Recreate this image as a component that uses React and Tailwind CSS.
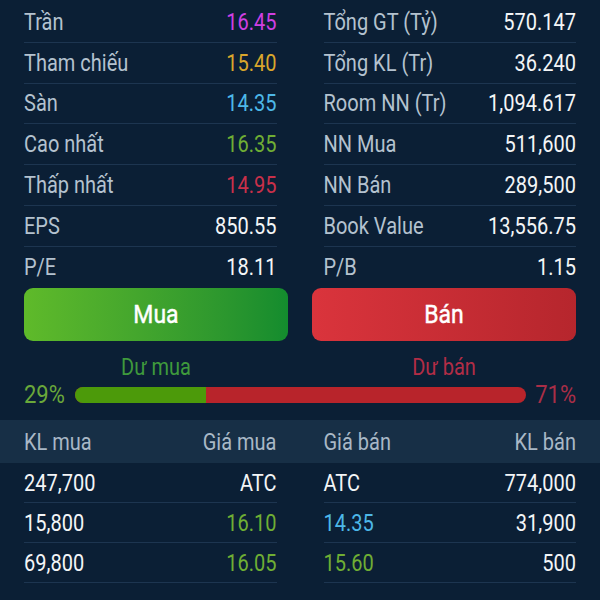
import React from "react";

const left = [
  ["Trần", "16.45", "text-[#cf3fe3]"],
  ["Tham chiếu", "15.40", "text-[#d9a62c]"],
  ["Sàn", "14.35", "text-[#4db8e8]"],
  ["Cao nhất", "16.35", "text-[#6fae34]"],
  ["Thấp nhất", "14.95", "text-[#c9304a]"],
  ["EPS", "850.55", "text-[#f3f5f7]"],
  ["P/E", "18.11", "text-[#f3f5f7]"],
];
const right = [
  ["Tổng GT (Tỷ)", "570.147"],
  ["Tổng KL (Tr)", "36.240"],
  ["Room NN (Tr)", "1,094.617"],
  ["NN Mua", "511,600"],
  ["NN Bán", "289,500"],
  ["Book Value", "13,556.75"],
  ["P/B", "1.15"],
];

function T({ className = "", children }) {
  return <span className={"inline-block scale-y-[1.16] " + className}>{children}</span>;
}

function Row({ label, value, color, last }) {
  return (
    <div
      className={
        "h-[40.75px] flex items-center justify-between " +
        (last ? "" : "border-b border-[#1d3550]")
      }
    >
      <T className="text-[#b4c2cf]">{label}</T>
      <T className={color}>{value}</T>
    </div>
  );
}

const book = [
  ["247,700", "ATC", "text-[#f3f5f7]", "ATC", "text-[#f3f5f7]", "774,000"],
  ["15,800", "16.10", "text-[#6fae34]", "14.35", "text-[#4db8e8]", "31,900"],
  ["69,800", "16.05", "text-[#6fae34]", "15.60", "text-[#6fae34]", "500"],
];

export default function App() {
  return (
    <div
      className="w-[600px] h-[600px] overflow-hidden bg-[#0b1f35] text-[20px] leading-[24px] text-[#f3f5f7]"
      style={{ fontFamily: "Roboto, 'Noto Sans', sans-serif" }}
    >
      <div className="grid grid-cols-2 gap-x-[47px] px-[24px] pt-[2px]">
        <div className="flex flex-col">
          {left.map((r, i) => (
            <Row key={i} label={r[0]} value={r[1]} color={r[2]} last={i === left.length - 1} />
          ))}
        </div>
        <div className="flex flex-col">
          {right.map((r, i) => (
            <Row key={i} label={r[0]} value={r[1]} color="text-[#f3f5f7]" last={i === right.length - 1} />
          ))}
        </div>
      </div>

      <div className="grid grid-cols-2 gap-x-[24px] px-[24px] mt-[1px]">
        <div className="h-[53px] rounded-[9px] bg-gradient-to-r from-[#5fba2a] to-[#138c2e] flex items-center justify-center text-[23px] text-white">
          <T className="[-webkit-text-stroke:0.4px_white]">Mua</T>
        </div>
        <div className="h-[53px] rounded-[9px] bg-gradient-to-r from-[#da343c] to-[#b6262d] flex items-center justify-center text-[23px] text-white">
          <T className="[-webkit-text-stroke:0.4px_white]">Bán</T>
        </div>
      </div>

      <div className="grid grid-cols-2 gap-x-[24px] px-[24px] mt-[14px]">
        <div className="text-center text-[#3f9a3c]"><T>Dư mua</T></div>
        <div className="text-center text-[#b22d46]"><T>Dư bán</T></div>
      </div>

      <div className="flex items-center px-[24px] mt-[4px] h-[24px] text-[22px]">
        <T className="text-[#6aa83a] w-[42px]">29%</T>
        <div className="ml-[9px] w-[451px] h-[16px] rounded-full overflow-hidden flex bg-[#b8242b]">
          <div className="h-full bg-[#4c9a0a]" style={{ width: "29%" }} />
        </div>
        <T className="ml-auto text-[#a92e47]">71%</T>
      </div>

      <div className="mt-[13px] bg-[#172f46] h-[43px] grid grid-cols-2 gap-x-[47px] px-[24px] items-center text-[#a9b8c6]">
        <div className="flex justify-between">
          <T>KL mua</T>
          <T>Giá mua</T>
        </div>
        <div className="flex justify-between">
          <T>Giá bán</T>
          <T>KL bán</T>
        </div>
      </div>

      <div className="grid grid-cols-2 gap-x-[47px] px-[24px]">
        <div className="flex flex-col">
          {book.map((b, i) => (
            <div key={i} className="h-[40px] flex items-center justify-between border-b border-[#1d3550]">
              <T>{b[0]}</T>
              <T className={b[2]}>{b[1]}</T>
            </div>
          ))}
        </div>
        <div className="flex flex-col">
          {book.map((b, i) => (
            <div key={i} className="h-[40px] flex items-center justify-between border-b border-[#1d3550]">
              <T className={b[4]}>{b[3]}</T>
              <T>{b[5]}</T>
            </div>
          ))}
        </div>
      </div>
    </div>
  );
}
